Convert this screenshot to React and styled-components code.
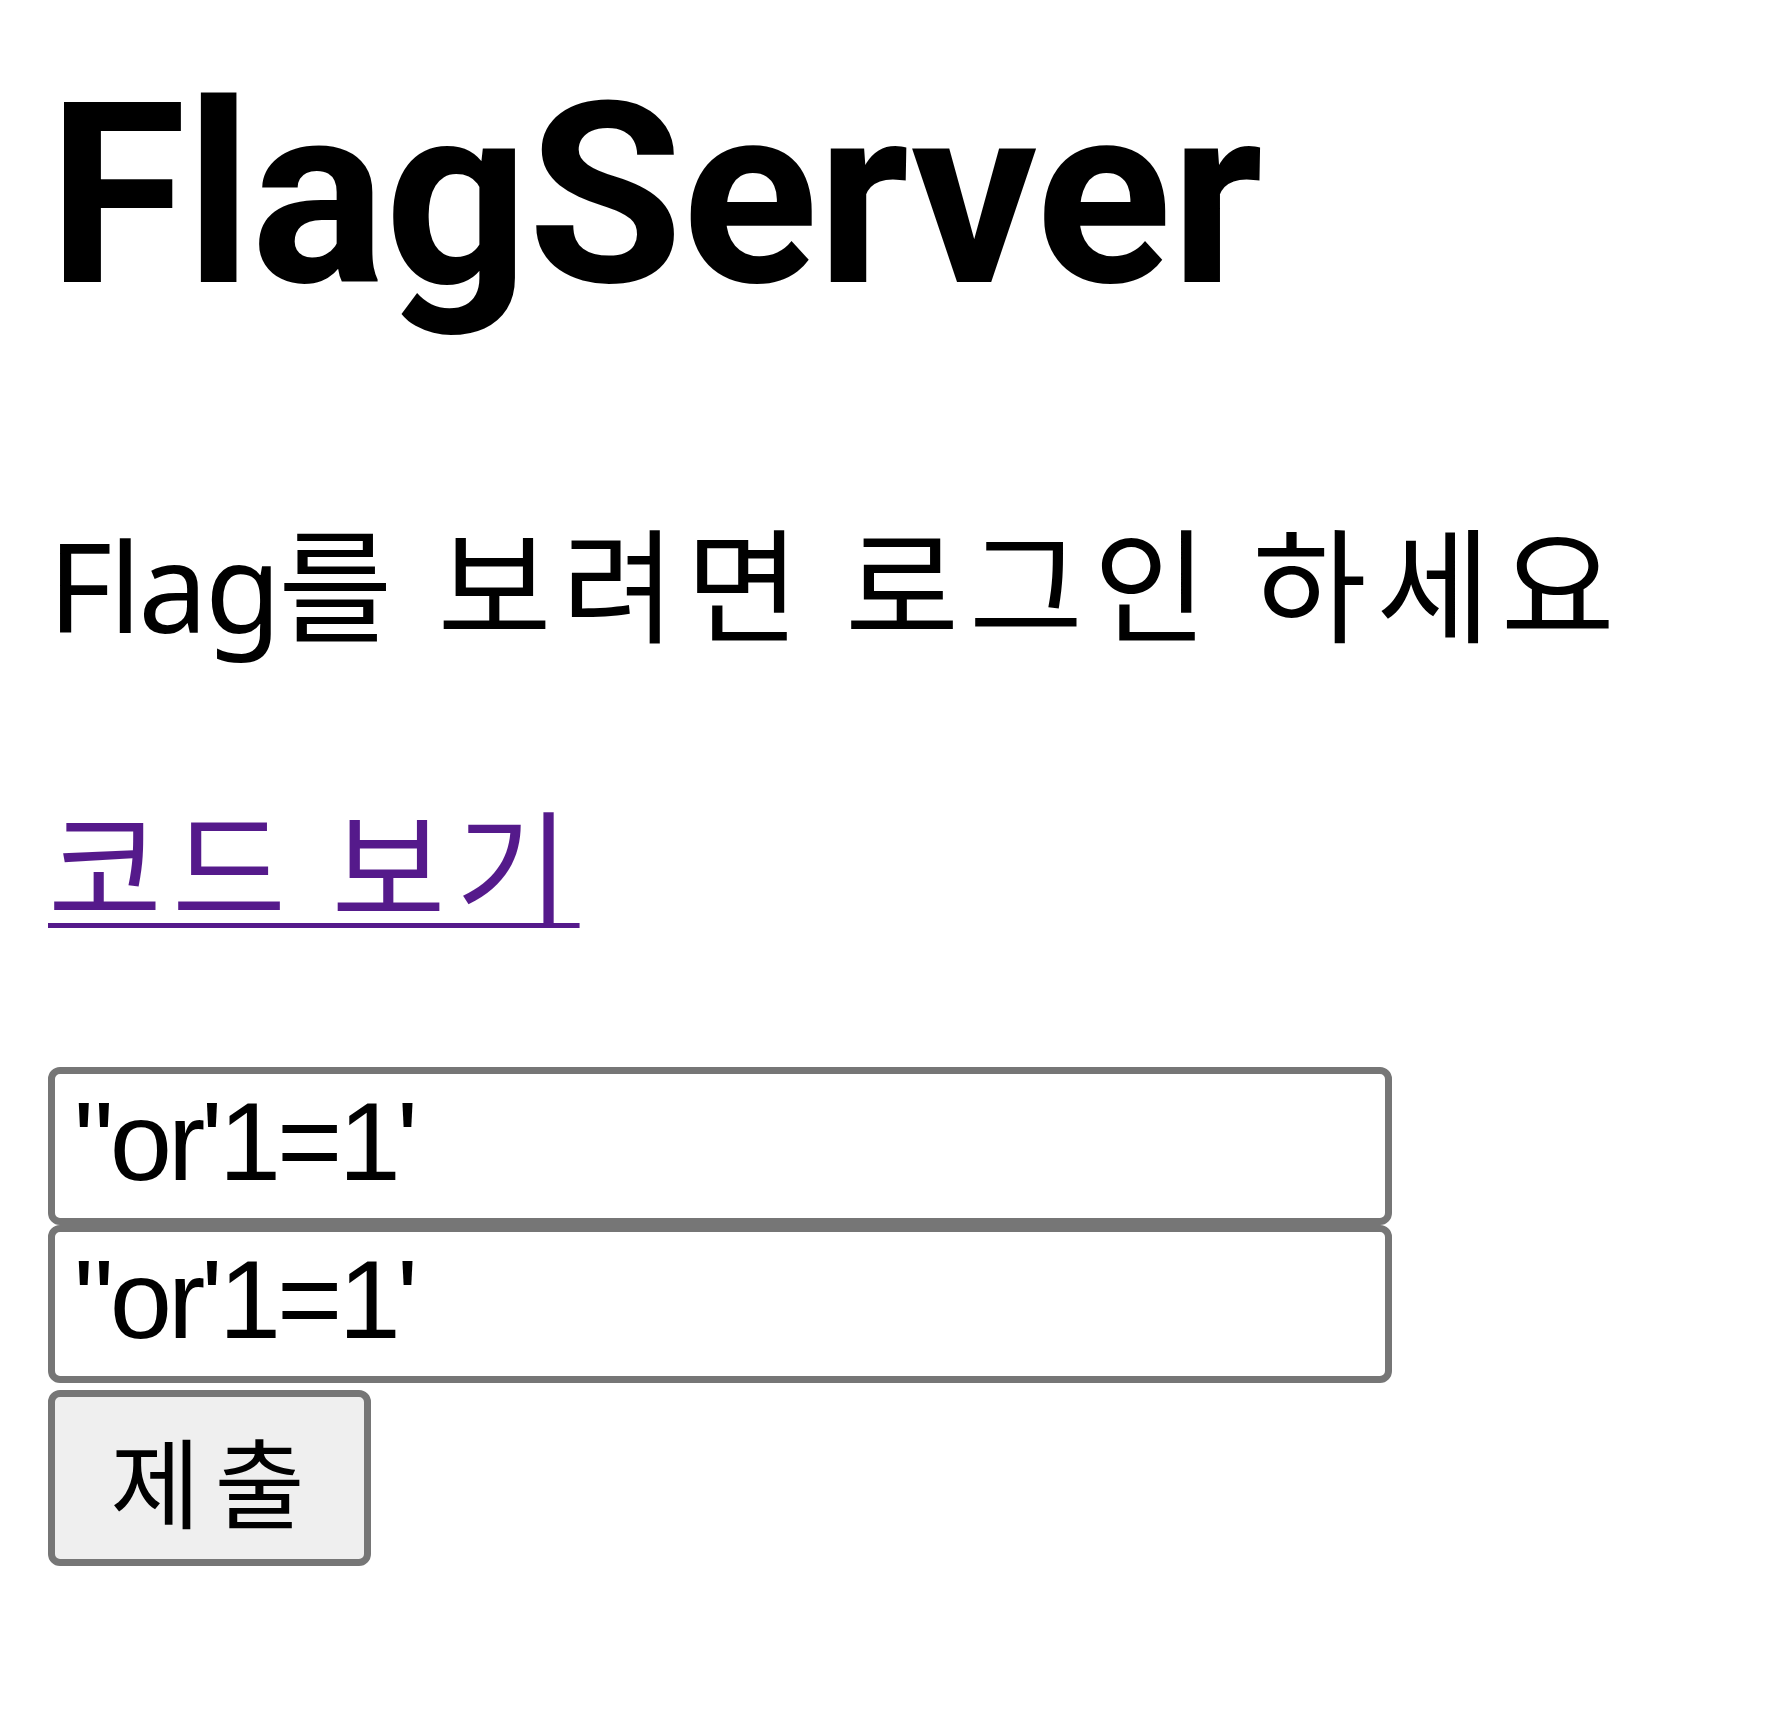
import React, { useState } from 'react';
import styled, { createGlobalStyle } from 'styled-components';

const GlobalStyle = createGlobalStyle`
  html, body {
    margin: 0;
    padding: 0;
    background: #ffffff;
  }
  body {
    font-family: "Noto Sans", "Noto Sans CJK KR", sans-serif;
    color: #000000;
  }
`;

const Page = styled.main`
  display: flex;
  flex-direction: column;
  align-items: flex-start;
  padding: 74px 0 120px 48px;
`;

const Title = styled.h1`
  margin: 0;
  font-family: Roboto, "Noto Sans", sans-serif;
  font-size: 252px;
  line-height: 245px;
  font-weight: 700;
  letter-spacing: -1px;
`;

// hangul runs wide in the shot, latin stays tight
const Text = styled.p`
  margin: ${props => props.gap}px 0 0;
  font-size: 124px;
  line-height: 154px;
  letter-spacing: 10px;
  word-spacing: -7px;
`;

const Latin = styled.span`
  letter-spacing: -3px;
`;

const CodeLink = styled.a`
  color: #551a8b;
  text-decoration: underline;
  text-decoration-thickness: 5px;
  text-underline-offset: 8px;
`;

const LoginForm = styled.form`
  display: flex;
  flex-direction: column;
  align-items: flex-start;
  margin-top: 123px;
`;

const Field = styled.input`
  box-sizing: border-box;
  width: 1344px;
  height: 158px;
  padding: 0 19px 10px;
  border: 7px solid #767676;
  border-radius: 12px;
  background: #ffffff;
  font-family: "Liberation Sans", Arial, sans-serif;
  font-size: 112px;
  letter-spacing: -4px;
  color: #000000;
  outline: none;
`;

const Submit = styled.button`
  box-sizing: border-box;
  width: 323px;
  height: 176px;
  margin-top: 7px;
  padding: 0 0 0 10px;
  border: 7px solid #767676;
  border-radius: 12px;
  background: #efefef;
  font-family: "Liberation Sans", "Noto Sans CJK KR", sans-serif;
  font-size: 98px;
  color: #000000;
  letter-spacing: 14px;
`;

export default function App() {
  const [user, setUser] = useState(`"or'1=1'`);
  const [pass, setPass] = useState(`"or'1=1'`);

  return (
    <>
      <GlobalStyle />
      <Page>
        <Title>FlagServer</Title>
        <Text gap={189}>
          <Latin>Flag</Latin>를 보려면 로그인 하세요
        </Text>
        <Text gap={128}>
          <CodeLink href="#source">코드 보기</CodeLink>
        </Text>
        <LoginForm onSubmit={e => e.preventDefault()}>
          <Field value={user} onChange={e => setUser(e.target.value)} />
          <Field value={pass} onChange={e => setPass(e.target.value)} />
          <Submit type="submit">제출</Submit>
        </LoginForm>
      </Page>
    </>
  );
}
